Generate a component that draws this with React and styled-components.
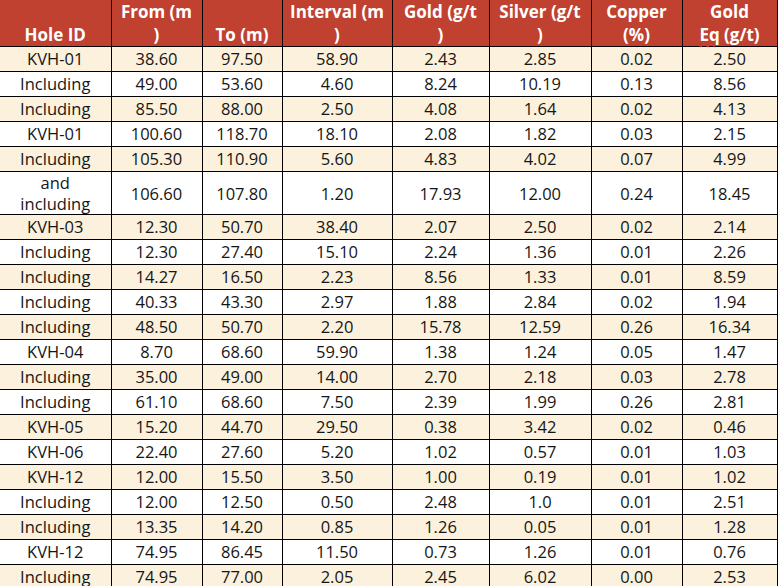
import styled, { createGlobalStyle } from 'styled-components'

const GlobalStyle = createGlobalStyle`
body {
    margin: 0;
    background: #ffffff;
    font-family: "Open Sans", "Noto Sans", "Liberation Sans", sans-serif;
}
`

const columns = [
    { label: ['Hole ID'], width: 111 },
    { label: ['From (m', ')'], width: 91 },
    { label: ['To (m)'], width: 80 },
    { label: ['Interval (m', ')'], width: 110 },
    { label: ['Gold (g/t', ')'], width: 97 },
    { label: ['Silver (g/t', ')'], width: 102 },
    { label: ['Copper', '(%)'], width: 91 },
    { label: ['Gold', 'EQ'], width: 95 },
]

const rows = [
    ['KVH-01', '38.60', '97.50', '58.90', '2.43', '2.85', '0.02', '2.50'],
    ['Including', '49.00', '53.60', '4.60', '8.24', '10.19', '0.13', '8.56'],
    ['Including', '85.50', '88.00', '2.50', '4.08', '1.64', '0.02', '4.13'],
    ['KVH-01', '100.60', '118.70', '18.10', '2.08', '1.82', '0.03', '2.15'],
    ['Including', '105.30', '110.90', '5.60', '4.83', '4.02', '0.07', '4.99'],
    ['and including', '106.60', '107.80', '1.20', '17.93', '12.00', '0.24', '18.45'],
    ['KVH-03', '12.30', '50.70', '38.40', '2.07', '2.50', '0.02', '2.14'],
    ['Including', '12.30', '27.40', '15.10', '2.24', '1.36', '0.01', '2.26'],
    ['Including', '14.27', '16.50', '2.23', '8.56', '1.33', '0.01', '8.59'],
    ['Including', '40.33', '43.30', '2.97', '1.88', '2.84', '0.02', '1.94'],
    ['Including', '48.50', '50.70', '2.20', '15.78', '12.59', '0.26', '16.34'],
    ['KVH-04', '8.70', '68.60', '59.90', '1.38', '1.24', '0.05', '1.47'],
    ['Including', '35.00', '49.00', '14.00', '2.70', '2.18', '0.03', '2.78'],
    ['Including', '61.10', '68.60', '7.50', '2.39', '1.99', '0.26', '2.81'],
    ['KVH-05', '15.20', '44.70', '29.50', '0.38', '3.42', '0.02', '0.46'],
    ['KVH-06', '22.40', '27.60', '5.20', '1.02', '0.57', '0.01', '1.03'],
    ['KVH-12', '12.00', '15.50', '3.50', '1.00', '0.19', '0.01', '1.02'],
    ['Including', '12.00', '12.50', '0.50', '2.48', '1.0', '0.01', '2.51'],
    ['Including', '13.35', '14.20', '0.85', '1.26', '0.05', '0.01', '1.28'],
    ['KVH-12', '74.95', '86.45', '11.50', '0.73', '1.26', '0.01', '0.76'],
    ['Including', '74.95', '77.00', '2.05', '2.45', '6.02', '0.00', '2.53'],
]

const App = () => {
    return (
        <>
            <GlobalStyle />
            <Table>
                <colgroup>
                    {columns.map((c, i) => <col key={i} style={{ width: c.width }} />)}
                </colgroup>
                <thead>
                    <tr>
                        {columns.map((c, i) => (
                            <HeadCell key={i}>
                                {i === 7 ? (
                                    <>Gold<br /><Squiggle>Eq</Squiggle> (g/t)</>
                                ) : (
                                    c.label.map((line, j) => (
                                        <span key={j}>{j > 0 && <br />}{line}</span>
                                    ))
                                )}
                            </HeadCell>
                        ))}
                    </tr>
                </thead>
                <tbody>
                    {rows.map((r, i) => {
                        const tall = r[0] === 'and including'
                        return (
                            <Row key={i} $shade={i % 2 === 0}>
                                {r.map((v, j) => (
                                    <Cell key={j} $tall={tall}>
                                        {tall && j === 0 ? <>and<br />including</> : v}
                                    </Cell>
                                ))}
                            </Row>
                        )
                    })}
                </tbody>
            </Table>
        </>
    )
}

const Table = styled.table`
border-collapse: collapse;
table-layout: fixed;
width: 777px;
font-size: 16.5px;
color: #161616;
`

const HeadCell = styled.th`
background: #c0412f;
color: #ffffff;
font-weight: 700;
font-size: 17px;
height: 42px;
padding: 0 3px;
line-height: 23px;
vertical-align: bottom;
text-align: center;
border: 1px solid #000000;
border-top: none;
&:first-child {
    border-left: none;
}
`

const Squiggle = styled.span`
text-decoration: underline wavy #e53935;
text-decoration-thickness: 1px;
text-underline-offset: 2px;
`

const Row = styled.tr`
background: ${p => p.$shade ? '#fbf1dc' : '#ffffff'};
`

const Cell = styled.td`
height: 20px;
padding: ${p => p.$tall ? '0 4px' : '2px 4px'};
line-height: ${p => p.$tall ? '21px' : '20px'};
text-align: center;
vertical-align: middle;
border: 1px solid #000000;
&:first-child {
    border-left: none;
}
`

export default App
